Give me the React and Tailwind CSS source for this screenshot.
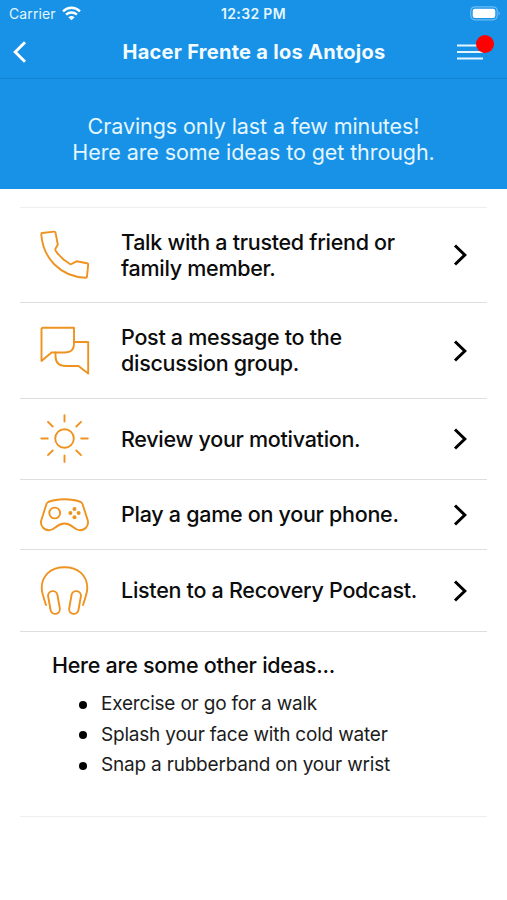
import React from 'react';

const iconProps = {
  fill: 'none',
  stroke: '#ee9320',
  strokeWidth: 1.9,
  strokeLinecap: 'round',
  strokeLinejoin: 'round',
};

const PhoneIcon = () => (
  <svg width="50" height="50" viewBox="0 0 50 50" {...iconProps}>
    <path d="M2 3 Q1.2 3.2 1.3 4.5 C3 28 20 46.5 45.5 47.7 Q46.8 47.8 47 46.5 L48.2 34.5 Q48.3 33.4 47 33.2 L36.5 31.3 L31.5 34 Q30.5 34.5 29.6 33.8 C23.5 30 18.5 25.3 15.5 20.4 Q15 19.5 15.5 18.7 L17.8 14.5 L15.5 2.6 Q15.2 1.5 14 1.6 Z" />
  </svg>
);

const ChatIcon = () => (
  <svg width="50" height="50" viewBox="0 0 50 50" {...iconProps}>
    <path d="M3 1.8 H34 V18 Q34 26.5 25 26.5 H11.5 L1.5 35 V3.3 Q1.5 1.8 3 1.8 Z" />
    <path d="M34 16 H48.2 V47.5 L38.5 40 H26 Q15.5 40 15.5 30 V26.5" />
  </svg>
);

const SunIcon = () => (
  <svg width="50" height="50" viewBox="0 0 50 50" {...iconProps}>
    <circle cx="24.5" cy="24.5" r="9.3" />
    <path d="M24.5 1.1 V7.5 M24.5 41.5 V47.9 M1.3 24.5 H7.8 M41.2 24.5 H47.8 M8 7.8 L12.7 12.5 M36.3 36.5 L41 41.2 M41 7.8 L36.3 12.5 M12.7 36.5 L8 41.2" />
  </svg>
);

const GameIcon = () => (
  <svg width="50" height="34" viewBox="0 0 50 34" {...iconProps}>
    <path d="M8.3 4 Q15 1.2 24.5 1.2 Q34 1.2 40.7 4 Q42 4.6 42.5 6 L47.8 22.5 C49 28 45 32.3 40 32.3 C33.5 32.3 33 25.5 24.5 25.5 C16 25.5 15.5 32.3 9 32.3 C4 32.3 0 28 1.2 22.5 L6.5 6 Q7 4.6 8.3 4 Z" />
    <circle cx="14.7" cy="15" r="5.4" />
    <g fill="#ee9320" stroke="none">
      <circle cx="34.5" cy="11" r="2" />
      <circle cx="34.5" cy="19.3" r="2" />
      <circle cx="30.4" cy="15.1" r="2" />
      <circle cx="38.6" cy="15.1" r="2" />
    </g>
  </svg>
);

const HeadphonesIcon = () => (
  <svg width="50" height="50" viewBox="0 0 50 50" {...iconProps}>
    <path d="M6 39 C3.8 32.5 1.7 26.5 1.7 22 C1.7 9.5 11 1.2 24.5 1.2 C38 1.2 47.3 9.5 47.3 22 C47.3 26.5 45.2 32.5 43 39" />
    <rect x="9.3" y="25" width="9.4" height="23" rx="4.7" transform="rotate(-10 14 36.5)" />
    <rect x="30.3" y="25" width="9.4" height="23" rx="4.7" transform="rotate(10 35 36.5)" />
  </svg>
);

const actions = [
  { text: 'Talk with a trusted friend or family member.', icon: PhoneIcon, height: 'h-[95px]' },
  { text: 'Post a message to the discussion group.', icon: ChatIcon, height: 'h-[96px]' },
  { text: 'Review your motivation.', icon: SunIcon, height: 'h-[81px]' },
  { text: 'Play a game on your phone.', icon: GameIcon, height: 'h-[70px]' },
  { text: 'Listen to a Recovery Podcast.', icon: HeadphonesIcon, height: 'h-[82px]' },
];

const ideas = [
  'Exercise or go for a walk',
  'Splash your face with cold water',
  'Snap a rubberband on your wrist',
];

const StatusBar = () => (
  <div className="grid h-[27px] grid-cols-3 items-center pl-[9px] pr-[6px] text-[14px] text-[#e4f6ff]">
    <div className="flex items-center gap-[6px]">
      <span className="tracking-[0.1px]">Carrier</span>
      <svg width="19" height="15" viewBox="0 0 19 15" fill="none" stroke="#fff" strokeWidth="2.4">
        <path d="M1 5.4 C6 0.6 13 0.6 18 5.4" />
        <path d="M4.1 8.7 C7.2 5.8 11.8 5.8 14.9 8.7" />
        <path d="M9.5 14.2 L6.4 11.2 Q9.5 8.6 12.6 11.2 Z" fill="#fff" stroke="none" />
      </svg>
    </div>
    <span className="-ml-[3px] pb-px text-center text-[14px] font-semibold tracking-[0.35px]">12:32 PM</span>
    <div className="flex justify-end">
      <svg width="31" height="15" viewBox="0 0 31 15">
        <rect x="0.8" y="0.8" width="26.4" height="13" rx="4" fill="none" stroke="#6fbdf3" strokeWidth="1.2" />
        <rect x="2.7" y="2.7" width="22.6" height="9.2" rx="2.2" fill="#fff" />
        <path d="M28.6 5 Q31 7.3 28.6 9.6 Z" fill="#6fbdf3" />
      </svg>
    </div>
  </div>
);

const NavBar = () => (
  <div className="flex h-[52px] items-center justify-between border-b border-[#1286d3] pb-[2px] pl-[13px] pr-[12px]">
    <button type="button" aria-label="Back" className="flex w-[38px]">
      <svg width="14" height="22" viewBox="0 0 14 22" fill="none" stroke="#fff" strokeWidth="2.9">
        <path d="M12 1.3 L2.2 11 L12 20.7" />
      </svg>
    </button>
    <h1 className="text-[20px] font-bold tracking-[0.28px] text-[#f4fcff]">Hacer Frente a los Antojos</h1>
    <button type="button" aria-label="Menu" className="relative flex w-[38px]">
      <svg width="27" height="18" viewBox="0 0 27 18" stroke="#e4f6ff" strokeWidth="2.2">
        <path d="M0 2.5 H26 M0 9 H26 M0 15.5 H26" />
      </svg>
      <span className="absolute -top-[8px] left-[19px] h-[18px] w-[18px] rounded-full bg-[#fe0000]"></span>
    </button>
  </div>
);

const ActionRow = ({ text, icon: Icon, height }) => (
  <li className={`flex items-center border-b border-[#dedede] pl-5 pr-[19px] ${height}`}>
    <Icon />
    <p className="mb-px ml-[31px] w-[310px] text-[21.5px] font-medium leading-[26px] tracking-[-0.28px]">{text}</p>
    <svg className="ml-auto" width="15" height="22" viewBox="0 0 15 22" fill="none" stroke="#000" strokeWidth="3">
      <path d="M2 1.5 L11.8 11 L2 20.5" />
    </svg>
  </li>
);

const App = () => {
  return (
    <div className="h-[900px] w-[507px] overflow-hidden bg-white font-['Inter',sans-serif] text-[#0c0c0c]">
      <header className="h-[189px] bg-[#1792e6]">
        <StatusBar />
        <NavBar />
        <p className="pt-[34px] text-center text-[21.5px] leading-[26px] tracking-[-0.08px] text-[#e4f6ff]">
          Cravings only last a few minutes!
          <br />
          Here are some ideas to get through.
        </p>
      </header>

      <main className="mx-5 mt-[18px] border-b border-[#eeeeee]">
        <ul className="border-t border-[#eeeeee]">
          {actions.map((action) => (
            <ActionRow key={action.text} {...action} />
          ))}
        </ul>

        <section className="h-[184px] pl-8 pt-[20px]">
          <h2 className="text-[21.5px] font-medium leading-[26px] tracking-[-0.26px]">Here are some other ideas...</h2>
          <ul className="mt-[11px] text-[19px] leading-[30.5px] tracking-[-0.2px] text-[#1c1c1c]">
            {ideas.map((idea) => (
              <li key={idea} className="flex items-center pl-[27px]">
                <span className="mr-[14px] mt-px h-2 w-2 rounded-full bg-black"></span>
                {idea}
              </li>
            ))}
          </ul>
        </section>
      </main>
    </div>
  );
};

export default App;
